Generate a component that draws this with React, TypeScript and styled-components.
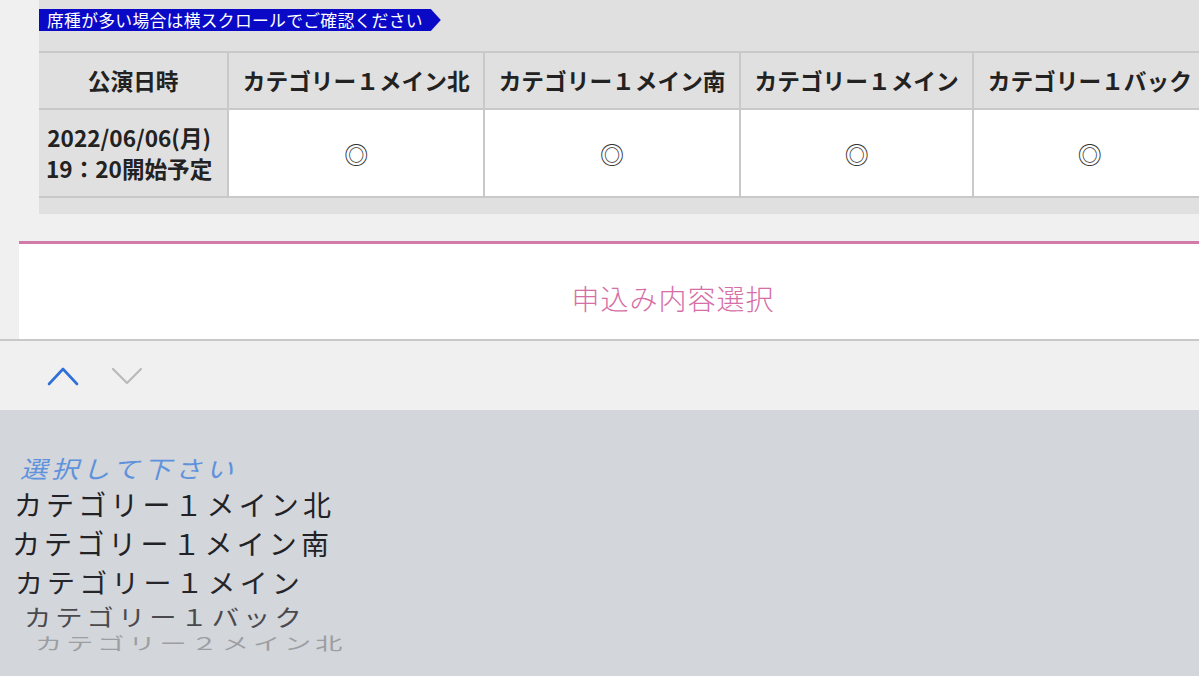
import React from "react";
import styled, { createGlobalStyle } from "styled-components";

const GlobalStyle = createGlobalStyle`
  html, body {
    margin: 0;
    padding: 0;
    background: #f0f0f0;
  }
  * {
    box-sizing: border-box;
  }
`;

// only the columns that fit in the visible part of the scroller
const columns = [
  "カテゴリー１メイン北",
  "カテゴリー１メイン南",
  "カテゴリー１メイン",
  "カテゴリー１バック",
];

interface PickerItem {
  label: string;
  height: number;
  scaleX: number;
  scaleY: number;
  indent: number;
  color: string;
  italic?: boolean;
}

const pickerItems: PickerItem[] = [
  { label: "選択して下さい", height: 34, scaleX: 0.97, scaleY: 0.85, indent: 20, color: "#5f92dc", italic: true },
  { label: "カテゴリー１メイン北", height: 38, scaleX: 1, scaleY: 1, indent: 14, color: "#222226" },
  { label: "カテゴリー１メイン南", height: 40, scaleX: 1, scaleY: 1, indent: 12, color: "#222226" },
  { label: "カテゴリー１メイン", height: 38, scaleX: 1, scaleY: 0.95, indent: 15, color: "#26262a" },
  { label: "カテゴリー１バック", height: 30, scaleX: 0.975, scaleY: 0.8, indent: 24, color: "#4a4a4e" },
  { label: "カテゴリー２メイン北", height: 24, scaleX: 0.97, scaleY: 0.6, indent: 35, color: "#9c9ea2" },
];

const App: React.FC = () => {
  return (
    <Page>
      <GlobalStyle />
      <SeatArea>
        <Notice>席種が多い場合は横スクロールでご確認ください</Notice>
        <TableScroller>
          <SeatTable>
            <thead>
              <tr>
                <HeadCell>公演日時</HeadCell>
                {columns.map((c) => (
                  <HeadCell key={c}>{c}</HeadCell>
                ))}
              </tr>
            </thead>
            <tbody>
              <tr>
                <DateCell>
                  2022/06/06(月)
                  <br />
                  19：20開始予定
                </DateCell>
                {columns.map((c) => (
                  <MarkCell key={c}>◎</MarkCell>
                ))}
              </tr>
            </tbody>
          </SeatTable>
        </TableScroller>
      </SeatArea>

      <SelectSection>
        <SectionTitle>申込み内容選択</SectionTitle>
      </SelectSection>

      <Toolbar>
        <ArrowButton aria-label="前へ">
          <svg width="32" height="20" viewBox="0 0 32 20">
            <polyline
              points="2,18 16,3 30,18"
              fill="none"
              stroke="#2f6fd8"
              strokeWidth="2.6"
              strokeLinecap="round"
              strokeLinejoin="round"
            />
          </svg>
        </ArrowButton>
        <ArrowButton aria-label="次へ">
          <svg width="32" height="20" viewBox="0 0 32 20">
            <polyline
              points="2,3 16,17 30,3"
              fill="none"
              stroke="#b9b9bb"
              strokeWidth="2.2"
              strokeLinecap="round"
              strokeLinejoin="round"
            />
          </svg>
        </ArrowButton>
      </Toolbar>

      <Picker>
        {pickerItems.map((item) => (
          <PickerRow key={item.label} $height={item.height} $indent={item.indent}>
            <PickerLabel
              $scaleX={item.scaleX}
              $scaleY={item.scaleY}
              $color={item.color}
              $italic={item.italic}
            >
              {item.label}
            </PickerLabel>
          </PickerRow>
        ))}
      </Picker>
    </Page>
  );
};

export default App;

const Page = styled.div`
  width: 1199px;
  height: 676px;
  overflow: hidden;
  display: flex;
  flex-direction: column;
  background: #f0f0f0;
  font-family: "Noto Sans CJK JP", "Noto Sans", sans-serif;
`;

const SeatArea = styled.div`
  margin-left: 39px;
  background: #e0e0e0;
  padding: 8px 0 16px;
  flex-shrink: 0;
`;

const Notice = styled.div`
  display: inline-block;
  height: 22px;
  line-height: 22px;
  padding: 0 18px 0 8px;
  background: #0a0ac6;
  color: #ffffff;
  font-size: 16.8px;
  letter-spacing: 0.3px;
  clip-path: polygon(0 0, calc(100% - 10px) 0, 100% 50%, calc(100% - 10px) 100%, 0 100%);
`;

const TableScroller = styled.div`
  margin-top: 19px;
  overflow: hidden;
  width: 1160px;
`;

const SeatTable = styled.table`
  border-collapse: collapse;
  border-top: 2px solid #c9c9c9;
  border-bottom: 2px solid #c9c9c9;
`;

const HeadCell = styled.th`
  height: 57px;
  padding: 0 13.5px;
  background: #e0e0e0;
  border-right: 2px solid #c9c9c9;
  border-bottom: 2px solid #c9c9c9;
  color: #222222;
  font-size: 22.7px;
  font-weight: 700;
  white-space: nowrap;
  text-align: center;
`;

const DateCell = styled.td`
  height: 88px;
  padding: 0 15px 0 7px;
  background: #e0e0e0;
  border-right: 2px solid #c9c9c9;
  color: #222222;
  font-size: 22.6px;
  font-weight: 700;
  line-height: 31px;
  white-space: nowrap;
  text-align: center;
`;

const MarkCell = styled.td`
  background: #ffffff;
  border-right: 2px solid #c9c9c9;
  color: #333333;
  font-size: 24px;
  text-align: center;
  padding-top: 2px;
`;

const SelectSection = styled.div`
  margin: 27px 0 0 19px;
  width: 1308px;
  height: 98px;
  flex-shrink: 0;
  background: #ffffff;
  border-top: 3px solid #d27ba9;
  text-align: center;
  padding-top: 34px;
`;

const SectionTitle = styled.div`
  color: #d56fa6;
  font-size: 28px;
  font-weight: 300;
  line-height: 40px;
  letter-spacing: 1px;
`;

const Toolbar = styled.div`
  height: 71px;
  flex-shrink: 0;
  border-top: 2px solid #c8c8ca;
  background: #f0f0f1;
  display: flex;
  align-items: center;
  gap: 32px;
  padding: 0 0 0 47px;
`;

const ArrowButton = styled.div`
  width: 32px;
  height: 20px;
  display: flex;
  align-items: center;
  justify-content: center;
`;

const Picker = styled.div`
  flex: 1;
  background: #d3d6db;
  padding-top: 41px;
  display: flex;
  flex-direction: column;
`;

const PickerRow = styled.div<{ $height: number; $indent: number }>`
  height: ${({ $height }) => $height}px;
  padding-left: ${({ $indent }) => $indent}px;
  display: flex;
  align-items: center;
`;

const PickerLabel = styled.span<{
  $scaleX: number;
  $scaleY: number;
  $color: string;
  $italic?: boolean;
}>`
  display: inline-block;
  font-size: 28px;
  line-height: 32px;
  letter-spacing: 4.1px;
  white-space: nowrap;
  color: ${({ $color }) => $color};
  font-style: ${({ $italic }) => ($italic ? "italic" : "normal")};
  transform: scale(${({ $scaleX }) => $scaleX}, ${({ $scaleY }) => $scaleY});
  transform-origin: left center;
`;
